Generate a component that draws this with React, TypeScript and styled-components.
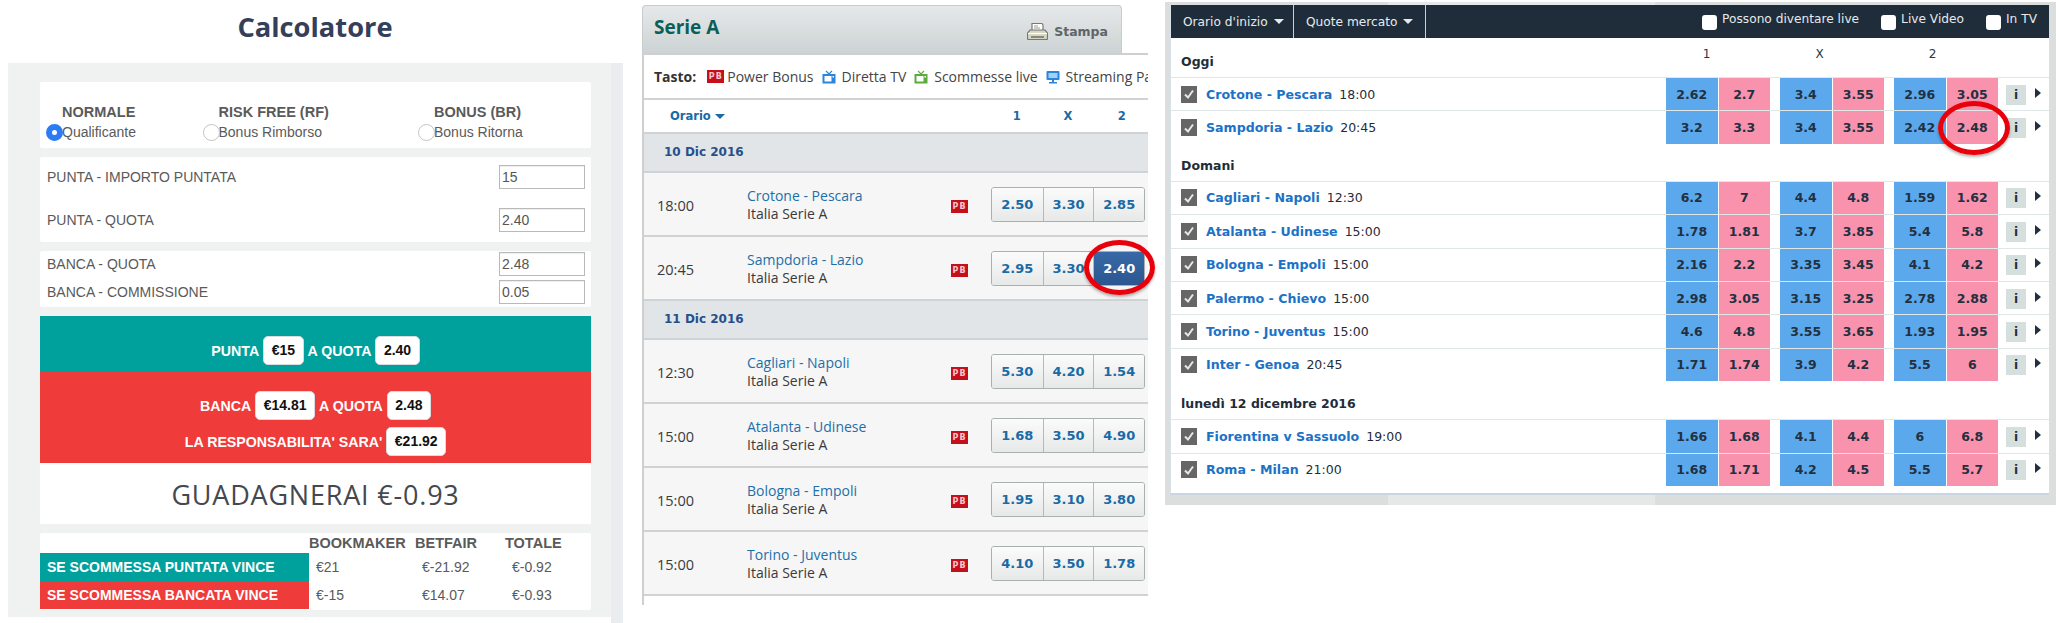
import styled, { createGlobalStyle } from "styled-components";

const GlobalStyle = createGlobalStyle`
  html, body {
    margin: 0;
    padding: 0;
    background: #fff;
  }
  * {
    box-sizing: border-box;
  }
`;

const ARIAL = `"Liberation Sans", Arial, sans-serif`;
const VERDANA = `"DejaVu Sans", Verdana, sans-serif`;
const LUCIDA = `"Open Sans", "DejaVu Sans", sans-serif`;

const Page = styled.div`
  display: flex;
  width: 2056px;
  height: 623px;
  overflow: hidden;
  background: #fff;
  font-family: ${ARIAL};
`;

/* ---- calcolatore ---- */

const Calculator = styled.section`
  width: 642px;
  flex: none;
`;

const Title = styled.h1`
  margin: 0;
  width: 630px;
  height: 63px;
  padding-top: 8px;
  text-align: center;
  font: 700 27.3px/38px "Open Sans", sans-serif;
  color: #34405a;
`;

const CalcBody = styled.div`
  display: flex;
  align-items: flex-start;
  margin-left: 8px;
`;

const CalcPanel = styled.div`
  width: 603px;
  height: 554px;
  padding: 19px 20px 0 32px;
  background: #f0f2f2;
  display: flex;
  flex-direction: column;
  gap: 9px;
`;

const Strip = styled.div`
  width: 12px;
  height: 560px;
  background: #e9edf0;
`;

const Card = styled.div<{ $height: number }>`
  height: ${(p) => p.$height}px;
  background: #fff;
  border-radius: 2px;
  color: #5a5a5a;
  font-size: 14px;
`;

const ModeCard = styled(Card)`
  display: grid;
  grid-template-columns: 156.5px 215.5px 1fr;
  padding: 20px 0 0 6px;
`;

const Mode = styled.div`
  padding-left: 16px;
  position: relative;
  line-height: 20px;
`;

const ModeName = styled.div`
  font-weight: 700;
  font-size: 14.5px;
`;

const Radio = styled.span<{ $on?: boolean }>`
  position: absolute;
  left: 0;
  top: 22px;
  width: 17px;
  height: 17px;
  border-radius: 50%;
  background: #fff;
  border: ${(p) => (p.$on ? "6px solid #2b7bf6" : "1px solid #c4c4c4")};
`;

const StakeCard = styled(Card)<{ $top: number }>`
  padding: ${(p) => p.$top}px 6px 0 7px;
  display: flex;
  flex-direction: column;
`;

const FieldRow = styled.div<{ $height: number }>`
  height: ${(p) => p.$height}px;
  display: flex;
  align-items: center;
  justify-content: space-between;
`;

const Field = styled.div`
  width: 86px;
  height: 24px;
  border: 1px solid #b9b9b9;
  box-shadow: inset 0 1px 1px #eee;
  padding-left: 2px;
  line-height: 22px;
  color: #555;
`;

const Band = styled.div<{ $bg: string; $height: number }>`
  height: ${(p) => p.$height}px;
  background: ${(p) => p.$bg};
  display: flex;
  flex-direction: column;
  align-items: center;
  justify-content: flex-end;
  gap: 7px;
  padding-bottom: 7px;
`;

const BandLine = styled.div`
  display: flex;
  align-items: center;
  gap: 4px;
  font-weight: 700;
  font-size: 14.2px;
  color: #fff;
`;

const Pill = styled.span`
  height: 29px;
  padding: 0 7.5px;
  background: #fff;
  border-radius: 5px;
  border: 1px solid #d6dde0;
  color: #111;
  line-height: 27px;
  font-size: 14px;
`;

const Result = styled(Card)`
  border-radius: 0;
  display: flex;
  align-items: center;
  justify-content: center;
  padding-top: 1px;
  font: 400 27px "Open Sans", sans-serif;
  letter-spacing: 0.8px;
  color: #45484d;
`;

const Stack = styled.div``;

const Outcome = styled(Card)`
  display: grid;
  grid-template-columns: 269px 106px 90px 1fr;
  grid-template-rows: 20px 28px 28px;
`;

const OutcomeHead = styled.div`
  font-weight: 700;
  font-size: 14.5px;
  line-height: 21px;
`;

const OutcomeLabel = styled.div<{ $bg: string }>`
  background: ${(p) => p.$bg};
  color: #fff;
  font-weight: 700;
  font-size: 14px;
  line-height: 28px;
  padding-left: 7px;
`;

const OutcomeValue = styled.div`
  padding-left: 7px;
  line-height: 28px;
`;

/* ---- serie a ---- */

const Listing = styled.section`
  position: relative;
  width: 523px;
  flex: none;
  padding-top: 5px;
  font-family: ${VERDANA};
`;

const Tab = styled.div`
  width: 480px;
  height: 48px;
  display: flex;
  justify-content: space-between;
  padding: 0 13px 0 11px;
  background: linear-gradient(#e6e9ea, #cdd2d4);
  border: 1px solid #c8cccd;
  border-bottom: 0;
  border-radius: 4px 4px 0 0;
`;

const TabTitle = styled.h2`
  margin: 0;
  font: 700 19px/42px ${LUCIDA};
  color: #0c5f59;
`;

const Print = styled.div`
  display: flex;
  align-items: center;
  gap: 6px;
  padding-top: 3px;
  font-weight: 700;
  font-size: 12.5px;
  color: #606568;
`;

const ListBody = styled.div`
  width: 506px;
  height: 552px;
  overflow: hidden;
  border-left: 2px solid #cfcfcf;
  border-top: 2px solid #cfcfcf;
`;

const Legend = styled.div`
  height: 45px;
  display: flex;
  align-items: center;
  white-space: nowrap;
  overflow: hidden;
  padding-left: 10px;
  font: 400 14px ${LUCIDA};
  color: #444;
  border-bottom: 2px solid #d0d3d4;
`;

const LegendTitle = styled.strong`
  color: #333;
  margin-right: 11px;
`;

const LegendItem = styled.span`
  display: flex;
  align-items: center;
  gap: 6px;
  margin-right: 8px;
`;

const Badge = styled.span`
  display: inline-block;
  flex: none;
  width: 17px;
  height: 13px;
  background: #c5101c;
  color: #f5c9c9;
  font: 700 8px/13px ${VERDANA};
  letter-spacing: 1px;
  text-align: center;
`;

const LegendBadge = styled(Badge)`
  margin-right: -3px;
`;

const ListHead = styled.div`
  height: 34px;
  display: flex;
  align-items: center;
  padding-left: 26px;
  font-weight: 700;
  font-size: 11.5px;
  color: #1a6aa5;
  border-bottom: 2px solid #cfd3d5;
`;

const Sort = styled.span`
  display: flex;
  align-items: center;
  gap: 4px;
  width: 333px;
`;

const Caret = styled.span<{ $color: string; $size?: number }>`
  width: 0;
  height: 0;
  border-left: ${(p) => p.$size ?? 5}px solid transparent;
  border-right: ${(p) => p.$size ?? 5}px solid transparent;
  border-top: ${(p) => p.$size ?? 5}px solid ${(p) => p.$color};
`;

const HeadCol = styled.span<{ $width: number }>`
  width: ${(p) => p.$width}px;
  text-align: center;
`;

const DateRow = styled.div`
  height: 39px;
  padding-left: 20px;
  background: #e1e5e7;
  border-bottom: 2px solid #cfd3d5;
  font-weight: 700;
  font-size: 12px;
  line-height: 37px;
  color: #26508c;
`;

const Match = styled.div`
  height: 64px;
  display: flex;
  align-items: center;
  background: #f6f6f6;
  border-bottom: 2px solid #d0d3d4;
  padding: 0 3px 0 13px;
  color: #3a3a3a;
  font: 400 14px ${LUCIDA};
`;

const Time = styled.span`
  width: 90px;
  flex: none;
  font-size: 14.5px;
  padding-top: 2px;
`;

const Teams = styled.div`
  width: 204px;
  flex: none;
  line-height: 18px;
  padding-top: 1px;
`;

const TeamLink = styled.div`
  color: #1e6fa8;
`;

const MatchBadge = styled(Badge)`
  margin-top: 5px;
`;

const OddsGroup = styled.div`
  display: flex;
  margin-left: 23px;
  height: 35px;
  border: 1px solid #aab0b2;
  border-radius: 3px;
  overflow: hidden;
  font-family: ${VERDANA};
`;

const OddsButton = styled.span<{ $active?: boolean }>`
  width: 51px;
  text-align: center;
  font-weight: 700;
  font-size: 13px;
  line-height: 33px;
  color: ${(p) => (p.$active ? "#fff" : "#1a6aa5")};
  background: ${(p) => (p.$active ? "linear-gradient(#3769a6, #2b5790)" : "linear-gradient(#fbfbfb, #e7e8e8)")};
  border-left: 1px solid #b4babc;
  &:first-child {
    border-left: 0;
  }
`;

const Ring = styled.div<{ $left: number; $top: number; $width: number; $height: number }>`
  position: absolute;
  left: ${(p) => p.$left}px;
  top: ${(p) => p.$top}px;
  width: ${(p) => p.$width}px;
  height: ${(p) => p.$height}px;
  border: 5px solid #e8000b;
  border-radius: 50%;
  box-shadow: 0 2px 3px rgba(0, 0, 0, 0.3);
`;

/* ---- mercato ---- */

const Market = styled.section`
  position: relative;
  width: 891px;
  height: 503px;
  flex: none;
  margin-top: 2px;
  padding: 3px 7px 0 5px;
  background: linear-gradient(90deg, #dcdede 0 25%, #e6e8e8 25% 55%, #dcdede 55% 100%);
  font-family: ${VERDANA};
`;

const MarketPanel = styled.div`
  height: 490px;
  background: #fff;
  border-bottom: 2px solid #c8d5e2;
  border-left: 1px solid #d6e2ec;
`;

const Toolbar = styled.div`
  height: 33px;
  display: flex;
  background: #1f2d3a;
  color: #e6eaec;
  font-size: 12.2px;
`;

const Dropdown = styled.div<{ $width: number }>`
  width: ${(p) => p.$width}px;
  display: flex;
  align-items: center;
  gap: 6px;
  padding-left: 12px;
  border-right: 1px solid #c9d0d4;
`;

const Filters = styled.div`
  margin-left: auto;
  display: flex;
  padding-top: 7px;
  padding-right: 12px;
`;

const Filter = styled.label<{ $gap: number }>`
  display: flex;
  gap: 5px;
  margin-left: ${(p) => p.$gap}px;
  line-height: 15px;
`;

const FilterBox = styled.span`
  width: 15px;
  height: 15px;
  margin-top: 3px;
  background: #fff;
  border-radius: 3px;
`;

const Section = styled.div<{ $height: number }>`
  height: ${(p) => p.$height}px;
  display: flex;
  justify-content: space-between;
  padding-left: 10px;
`;

const SectionTitle = styled.div`
  align-self: flex-end;
  padding-bottom: 8px;
  font-weight: 700;
  font-size: 12.5px;
  color: #1f2d3a;
`;

const ColLabels = styled.div`
  display: flex;
  margin: 9px 60px 0 0;
  font-size: 12px;
  color: #2a3744;
`;

const ColLabel = styled.span`
  width: 113px;
  text-align: center;
`;

const MarketRow = styled.div`
  height: 33.4px;
  display: flex;
  align-items: center;
  padding-left: 10px;
  border-top: 1px solid #dfe7e7;
  font-size: 12.5px;
  color: #1f2d3a;
`;

const Check = styled.span`
  flex: none;
  width: 16px;
  height: 17px;
  display: flex;
  align-items: center;
  justify-content: center;
  background: #666;
  margin-right: 9px;
`;

const MarketTeam = styled.span`
  font-weight: 700;
  font-size: 12.6px;
  color: #1b72c6;
  margin-right: 7px;
`;

const MarketOdds = styled.div`
  margin-left: auto;
  height: 100%;
  display: flex;
`;

const OddsCell = styled.span<{ $kind: "back" | "lay" }>`
  width: 51.5px;
  height: 100%;
  margin-left: ${(p) => (p.$kind === "lay" ? "1px" : "0")};
  margin-right: ${(p) => (p.$kind === "lay" ? "10px" : "0")};
  background: ${(p) => (p.$kind === "back" ? "#5ba9ec" : "#f993ad")};
  display: flex;
  align-items: center;
  justify-content: center;
  font-weight: 700;
  font-size: 12.5px;
  color: #22303f;
`;

const InfoButton = styled.span`
  width: 20px;
  height: 20px;
  margin: 1px 9px 0 -2px;
  background: #d5dfde;
  text-align: center;
  font-weight: 700;
  font-size: 12px;
  line-height: 21px;
  color: #22303f;
`;

const Arrow = styled.span`
  width: 0;
  height: 0;
  margin: -3px 8px 0 0;
  border-top: 5px solid transparent;
  border-bottom: 5px solid transparent;
  border-left: 6px solid #22303f;
`;

/* ---- icons ---- */

const TvIcon = ({ color }: { color: string }) => (
  <svg width="14" height="14" viewBox="0 0 14 14">
    <path d="M4 1l3 3 3-3" fill="none" stroke={color} strokeWidth="1.2" />
    <rect x="0.5" y="4" width="13" height="9.5" fill={color} />
    <rect x="2.5" y="6" width="7" height="5.5" fill="#fff" />
    <rect x="10.5" y="6" width="1.5" height="1.5" fill="#fff" />
  </svg>
);

const MonitorIcon = () => (
  <svg width="14" height="14" viewBox="0 0 14 14">
    <rect x="0.5" y="1" width="13" height="9" rx="1" fill="#2b85dc" />
    <rect x="2.5" y="3" width="9" height="5" fill="#9fd0f5" />
    <rect x="6" y="10" width="2" height="2" fill="#2b85dc" />
    <rect x="3" y="12" width="8" height="1.5" fill="#2b85dc" />
  </svg>
);

const PrinterIcon = () => (
  <svg width="21" height="19" viewBox="0 0 21 19">
    <path d="M5 8V1.5h10L16 3v5" fill="#fff" stroke="#777" strokeWidth="1.2" />
    <path d="M7 4h4M7 6h6" stroke="#999" strokeWidth="1" />
    <path d="M3 8h15l2.5 3v5.5a1 1 0 0 1-1 1h-18a1 1 0 0 1-1-1V11z" fill="#d4d6c0" stroke="#777" strokeWidth="1.2" />
    <path d="M1 11.5h19" stroke="#fff" strokeWidth="1.2" />
    <rect x="4" y="14" width="13" height="2" fill="#888" />
  </svg>
);

const CheckMark = () => (
  <svg width="12" height="12" viewBox="0 0 12 12">
    <path d="M2 6.5l3 3 5-7" fill="none" stroke="#e8e8e8" strokeWidth="2" />
  </svg>
);

/* ---- data ---- */

const LISTING = [
  {
    date: "10 Dic 2016",
    matches: [
      { time: "18:00", teams: "Crotone - Pescara", odds: ["2.50", "3.30", "2.85"] },
      { time: "20:45", teams: "Sampdoria - Lazio", odds: ["2.95", "3.30", "2.40"], active: 2 },
    ],
  },
  {
    date: "11 Dic 2016",
    matches: [
      { time: "12:30", teams: "Cagliari - Napoli", odds: ["5.30", "4.20", "1.54"] },
      { time: "15:00", teams: "Atalanta - Udinese", odds: ["1.68", "3.50", "4.90"] },
      { time: "15:00", teams: "Bologna - Empoli", odds: ["1.95", "3.10", "3.80"] },
      { time: "15:00", teams: "Torino - Juventus", odds: ["4.10", "3.50", "1.78"] },
    ],
  },
];

const MARKET = [
  {
    title: "Oggi",
    height: 39,
    rows: [
      ["Crotone - Pescara", "18:00", "2.62", "2.7", "3.4", "3.55", "2.96", "3.05"],
      ["Sampdoria - Lazio", "20:45", "3.2", "3.3", "3.4", "3.55", "2.42", "2.48"],
    ],
  },
  {
    title: "Domani",
    height: 37,
    rows: [
      ["Cagliari - Napoli", "12:30", "6.2", "7", "4.4", "4.8", "1.59", "1.62"],
      ["Atalanta - Udinese", "15:00", "1.78", "1.81", "3.7", "3.85", "5.4", "5.8"],
      ["Bologna - Empoli", "15:00", "2.16", "2.2", "3.35", "3.45", "4.1", "4.2"],
      ["Palermo - Chievo", "15:00", "2.98", "3.05", "3.15", "3.25", "2.78", "2.88"],
      ["Torino - Juventus", "15:00", "4.6", "4.8", "3.55", "3.65", "1.93", "1.95"],
      ["Inter - Genoa", "20:45", "1.71", "1.74", "3.9", "4.2", "5.5", "6"],
    ],
  },
  {
    title: "lunedì 12 dicembre 2016",
    height: 38,
    rows: [
      ["Fiorentina v Sassuolo", "19:00", "1.66", "1.68", "4.1", "4.4", "6", "6.8"],
      ["Roma - Milan", "21:00", "1.68", "1.71", "4.2", "4.5", "5.5", "5.7"],
    ],
  },
];

const App = () => {
  return (
    <>
      <GlobalStyle />
      <Page>
        <Calculator>
          <Title>Calcolatore</Title>
          <CalcBody>
            <CalcPanel>
              <ModeCard $height={66}>
                <Mode>
                  <ModeName>NORMALE</ModeName>
                  <Radio $on />
                  Qualificante
                </Mode>
                <Mode>
                  <ModeName>RISK FREE (RF)</ModeName>
                  <Radio />
                  Bonus Rimborso
                </Mode>
                <Mode>
                  <ModeName>BONUS (BR)</ModeName>
                  <Radio />
                  Bonus Ritorna
                </Mode>
              </ModeCard>
              <StakeCard $height={85} $top={8}>
                <FieldRow $height={24}>
                  PUNTA - IMPORTO PUNTATA
                  <Field>15</Field>
                </FieldRow>
                <FieldRow $height={19} />
                <FieldRow $height={24}>
                  PUNTA - QUOTA
                  <Field>2.40</Field>
                </FieldRow>
              </StakeCard>
              <StakeCard $height={56} $top={1}>
                <FieldRow $height={24}>
                  BANCA - QUOTA
                  <Field>2.48</Field>
                </FieldRow>
                <FieldRow $height={4} />
                <FieldRow $height={24}>
                  BANCA - COMMISSIONE
                  <Field>0.05</Field>
                </FieldRow>
              </StakeCard>
              <Stack>
                <Band $bg="#00a19d" $height={56}>
                  <BandLine>
                    PUNTA <Pill>€15</Pill> A QUOTA <Pill>2.40</Pill>
                  </BandLine>
                </Band>
                <Band $bg="#ef3b39" $height={91}>
                  <BandLine>
                    BANCA <Pill>€14.81</Pill> A QUOTA <Pill>2.48</Pill>
                  </BandLine>
                  <BandLine>
                    LA RESPONSABILITA' SARA' <Pill>€21.92</Pill>
                  </BandLine>
                </Band>
                <Result $height={61}>GUADAGNERAI €-0.93</Result>
              </Stack>
              <Outcome $height={77}>
                <span />
                <OutcomeHead>BOOKMAKER</OutcomeHead>
                <OutcomeHead>BETFAIR</OutcomeHead>
                <OutcomeHead>TOTALE</OutcomeHead>
                <OutcomeLabel $bg="#00a19d">SE SCOMMESSA PUNTATA VINCE</OutcomeLabel>
                <OutcomeValue>€21</OutcomeValue>
                <OutcomeValue>€-21.92</OutcomeValue>
                <OutcomeValue>€-0.92</OutcomeValue>
                <OutcomeLabel $bg="#ef3b39">SE SCOMMESSA BANCATA VINCE</OutcomeLabel>
                <OutcomeValue>€-15</OutcomeValue>
                <OutcomeValue>€14.07</OutcomeValue>
                <OutcomeValue>€-0.93</OutcomeValue>
              </Outcome>
            </CalcPanel>
            <Strip />
          </CalcBody>
        </Calculator>

        <Listing>
          <Tab>
            <TabTitle>Serie A</TabTitle>
            <Print>
              <PrinterIcon />
              Stampa
            </Print>
          </Tab>
          <ListBody>
            <Legend>
              <LegendTitle>Tasto:</LegendTitle>
              <LegendItem>
                <LegendBadge>PB</LegendBadge>Power Bonus
              </LegendItem>
              <LegendItem>
                <TvIcon color="#2b85dc" />Diretta TV
              </LegendItem>
              <LegendItem>
                <TvIcon color="#5cac3c" />Scommesse live
              </LegendItem>
              <LegendItem>
                <MonitorIcon />Streaming Partite
              </LegendItem>
            </Legend>
            <ListHead>
              <Sort>
                Orario <Caret $color="#1a6aa5" />
              </Sort>
              <HeadCol $width={49}>1</HeadCol>
              <HeadCol $width={57}>X</HeadCol>
              <HeadCol $width={54}>2</HeadCol>
            </ListHead>
            {LISTING.map((group) => (
              <div key={group.date}>
                <DateRow>{group.date}</DateRow>
                {group.matches.map((m) => (
                  <Match key={m.teams}>
                    <Time>{m.time}</Time>
                    <Teams>
                      <TeamLink>{m.teams}</TeamLink>
                      Italia Serie A
                    </Teams>
                    <MatchBadge>PB</MatchBadge>
                    <OddsGroup>
                      {m.odds.map((o, i) => (
                        <OddsButton key={i} $active={m.active === i}>
                          {o}
                        </OddsButton>
                      ))}
                    </OddsGroup>
                  </Match>
                ))}
              </div>
            ))}
          </ListBody>
          <Ring $left={442} $top={240} $width={71} $height={55} />
        </Listing>

        <Market>
          <MarketPanel>
            <Toolbar>
              <Dropdown $width={123}>
                Orario d'inizio <Caret $color="#e6eaec" />
              </Dropdown>
              <Dropdown $width={132}>
                Quote mercato <Caret $color="#e6eaec" />
              </Dropdown>
              <Filters>
                <Filter $gap={0}>
                  <FilterBox />
                  Possono diventare live
                </Filter>
                <Filter $gap={22}>
                  <FilterBox />
                  Live Video
                </Filter>
                <Filter $gap={22}>
                  <FilterBox />
                  In TV
                </Filter>
              </Filters>
            </Toolbar>
            {MARKET.map((section, s) => (
              <div key={section.title}>
                <Section $height={section.height}>
                  <SectionTitle>{section.title}</SectionTitle>
                  {s === 0 && (
                    <ColLabels>
                      <ColLabel>1</ColLabel>
                      <ColLabel>X</ColLabel>
                      <ColLabel>2</ColLabel>
                    </ColLabels>
                  )}
                </Section>
                {section.rows.map(([teams, time, ...odds]) => (
                  <MarketRow key={teams}>
                    <Check>
                      <CheckMark />
                    </Check>
                    <MarketTeam>{teams}</MarketTeam>
                    {time}
                    <MarketOdds>
                      {odds.map((o, i) => (
                        <OddsCell key={i} $kind={i % 2 === 0 ? "back" : "lay"}>
                          {o}
                        </OddsCell>
                      ))}
                    </MarketOdds>
                    <InfoButton>i</InfoButton>
                    <Arrow />
                  </MarketRow>
                ))}
              </div>
            ))}
          </MarketPanel>
          <Ring $left={773} $top={99} $width={72} $height={54} />
        </Market>
      </Page>
    </>
  );
};

export default App;
